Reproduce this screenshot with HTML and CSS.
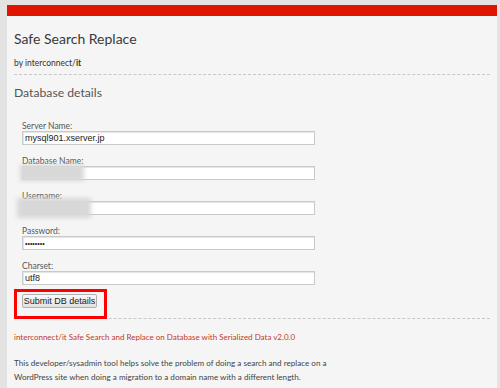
FILE: index.html
```html
<!DOCTYPE html>
<html lang="en">

<head>
  <meta charset="UTF-8" />
  <title>Safe Search Replace</title>
  <link rel="stylesheet" href="styles.css">
</head>

<body>
  <div class="page">
    <div class="topbar"></div>
    <div class="content">
      <h1 class="title">Safe Search Replace</h1>
      <p class="byline">by interconnect/<b>it</b></p>
      <div class="rule"></div>
      <h2 class="section">Database details</h2>

      <form class="dbform">
        <div class="field">
          <label class="label">Server Name:</label>
          <input class="input" type="text" value="mysql901.xserver.jp" />
        </div>
        <div class="field">
          <label class="label">Database Name:</label>
          <input class="input" type="text" value="" />
          <div class="blur blur-db"></div>
        </div>
        <div class="field">
          <label class="label">Username:</label>
          <input class="input" type="text" value="" />
          <div class="blur blur-user"></div>
        </div>
        <div class="field">
          <label class="label">Password:</label>
          <input class="input input-pass" type="password" value="xxxxxxxx" />
        </div>
        <div class="field">
          <label class="label">Charset:</label>
          <input class="input" type="text" value="utf8" />
        </div>
        <div class="highlight">
          <button type="button" class="submit">Submit DB details</button>
        </div>
      </form>

      <div class="rule rule-bottom"></div>
      <p class="version">interconnect/it Safe Search and Replace on Database with Serialized Data v2.0.0</p>
      <p class="about">This developer/sysadmin tool helps solve the problem of doing a search and replace on a<br>WordPress site when doing a migration to a domain name with a different length.</p>
    </div>
  </div>
</body>

</html>
```

FILE: styles.css
```css
html,
body {
  margin: 0;
  height: 100%;
}

body {
  background: #e3e3e3;
  padding: 5px 3px 0 7px;
  box-sizing: border-box;
  font-family: Lato, "Open Sans", sans-serif;
  color: #444;
}

.page {
  background: #f5f5f5;
  height: 100%;
  overflow: hidden;
}

.topbar {
  height: 11px;
  background: #e01500;
}

.content {
  padding: 0 7px;
}

.title {
  margin: 0;
  padding-top: 13px;
  font-size: 14px;
  font-weight: normal;
  line-height: 20px;
  color: #3a3a3a;
}

.byline {
  margin: 9px 0 0;
  font-size: 8.5px;
  line-height: 11px;
  color: #333;
}

.rule {
  margin-top: 5px;
  border-top: 1px dashed #c8c8c8;
}

.section {
  margin: 9px 0 0;
  font-size: 12.2px;
  font-weight: normal;
  line-height: 18px;
  color: #555;
}

.dbform {
  margin-top: 19px;
  padding-left: 8px;
}

.field {
  position: relative;
  margin-bottom: 11px;
}

.label {
  display: block;
  font-size: 8.5px;
  line-height: 10px;
  color: #555;
}

.input {
  display: block;
  box-sizing: border-box;
  width: 293px;
  height: 14px;
  margin: 0;
  padding: 0 2px;
  border: 1px solid #c9c9c9;
  box-shadow: inset 1px 1px 1px #e4e4e4;
  background: #fff;
  font-family: "Liberation Sans", Arial, sans-serif;
  font-size: 9px;
  color: #222;
}

.input-pass {
  font-size: 7px;
  letter-spacing: 0;
}

.blur {
  position: absolute;
  background: #d8d8d8;
  filter: blur(2px);
}

.blur-db {
  left: -2px;
  top: 9px;
  width: 64px;
  height: 16px;
}

.blur-user {
  left: -5px;
  top: 7px;
  width: 74px;
  height: 20px;
}

.field:nth-child(5) {
  margin-bottom: 3px;
}

.highlight {
  display: inline-block;
  margin-left: -8px;
  padding: 2px 7px 8px 5px;
  border: 3px solid #f00;
}

.submit {
  display: block;
  width: 75px;
  height: 14px;
  padding: 0;
  border: 1px solid #b0b0b0;
  border-radius: 2px;
  background: linear-gradient(#f8f8f8, #e2e2e2);
  font-family: "Liberation Sans", Arial, sans-serif;
  font-size: 9px;
  color: #222;
}

.rule-bottom {
  margin-top: -1px;
}

.version {
  margin: 12px 0 0;
  font-size: 8px;
  line-height: 12px;
  color: #c0392b;
}

.about {
  margin: 13px 0 0;
  font-size: 8.1px;
  line-height: 14px;
  color: #444;
}
```
